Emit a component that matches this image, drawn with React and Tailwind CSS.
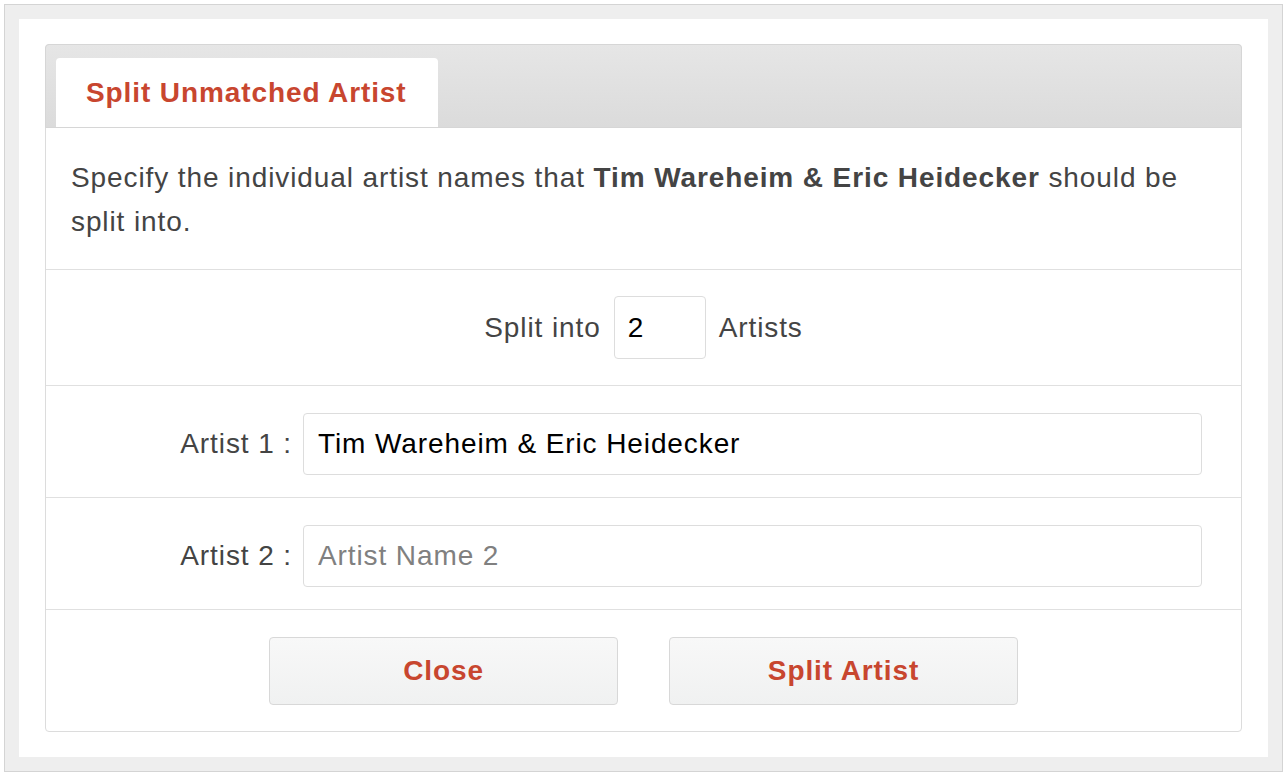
export default function App() {
  const font = { fontFamily: '"Liberation Sans", Arial, sans-serif', letterSpacing: '0.9px' };
  return (
    <div className="w-[1287px] h-[777px] bg-white p-[4px]" style={font}>
      <div className="w-[1279px] h-[768px] border border-[#d4d4d4] bg-[#eeeeee] p-[14px]">
        <div className="h-full bg-white pt-[25px] px-[26px]">
          <div className="border border-[#dcdcdc] rounded-[4px] text-[#444444] text-[28px]">
            {/* Header with tab */}
            <div className="h-[84px] -m-px rounded-t-[4px] border border-[#d6d6d6] bg-gradient-to-b from-[#e6e6e6] to-[#dbdbdb] flex items-end pl-[10px]">
              <div className="w-[382px] h-[69px] bg-white rounded-t-[4px] flex items-center pl-[30px]">
                <span className="font-bold text-[#c8462f] text-[28px]">Split Unmatched Artist</span>
              </div>
            </div>

            {/* Description */}
            <div className="h-[142px] px-[25px] pt-[29px] leading-[44px]">
              Specify the individual artist names that <b className="font-bold">Tim Wareheim &amp; Eric Heidecker</b> should be split into.
            </div>

            {/* Split count */}
            <div className="h-[116px] border-t border-[#e0e0e0] flex items-center justify-center gap-[13px]">
              <span>Split into</span>
              <input
                defaultValue="2"
                className="w-[92px] h-[63px] border border-[#dddddd] rounded-[4px] pl-[13px] text-black text-[28px] outline-none"
                style={font}
              />
              <span>Artists</span>
            </div>

            {/* Artist rows */}
            {[
              { label: 'Artist 1 :', value: 'Tim Wareheim & Eric Heidecker' },
              { label: 'Artist 2 :', placeholder: 'Artist Name 2' },
            ].map((row) => (
              <div key={row.label} className="h-[112px] border-t border-[#e0e0e0] flex items-start pt-[27px] pr-[39px]">
                <span className="w-[257px] h-[62px] flex items-center justify-end pr-[11px]">{row.label}</span>
                <input
                  defaultValue={row.value}
                  placeholder={row.placeholder}
                  className="flex-1 h-[62px] border border-[#dddddd] rounded-[4px] px-[14px] text-black text-[28px] placeholder:text-[#808080] outline-none"
                  style={font}
                />
              </div>
            ))}

            {/* Buttons */}
            <div className="h-[122px] border-t border-[#e0e0e0] flex items-center justify-center gap-[51px]">
              {['Close', 'Split Artist'].map((t) => (
                <button
                  key={t}
                  className="w-[349px] h-[68px] border border-[#d8d8d8] rounded-[4px] bg-gradient-to-b from-[#f8f8f8] to-[#f0f1f1] font-bold text-[#c8462f] text-[28px]"
                  style={font}
                >
                  {t}
                </button>
              ))}
            </div>
          </div>
        </div>
      </div>
    </div>
  );
}
